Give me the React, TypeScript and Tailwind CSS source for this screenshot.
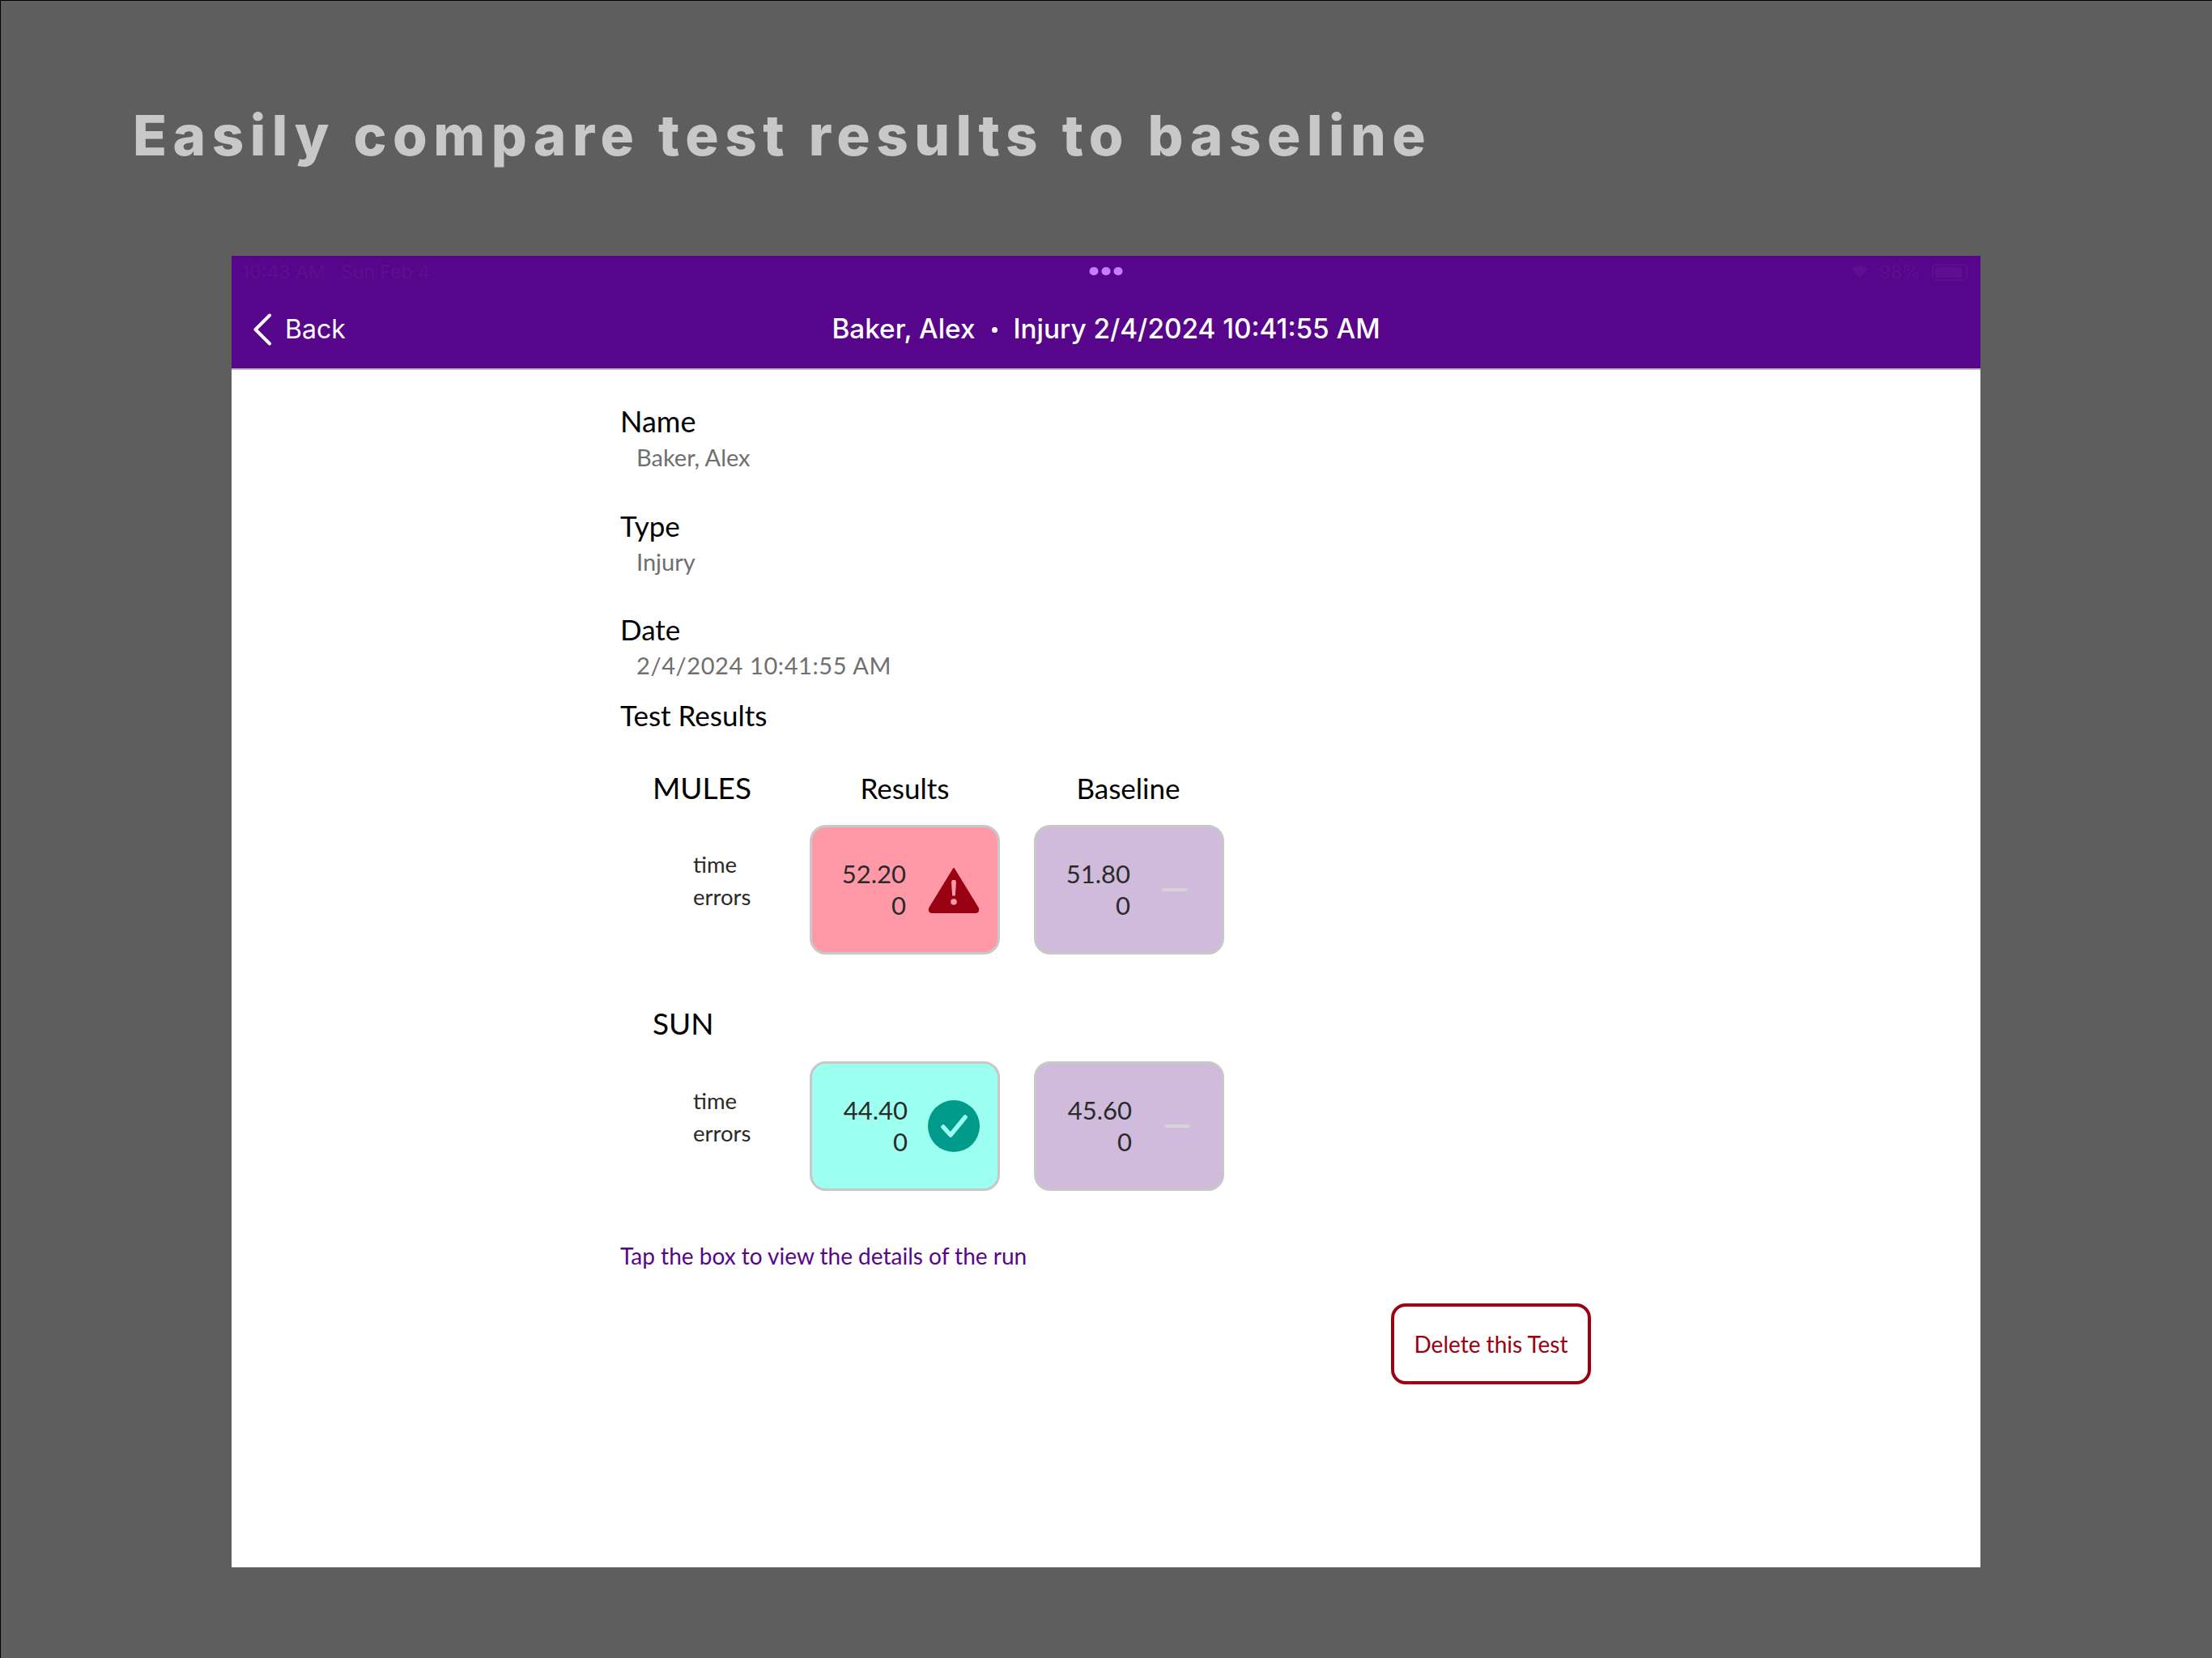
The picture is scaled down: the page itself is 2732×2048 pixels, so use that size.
const body = "font-['Lato',sans-serif]";

function Field({
  label,
  value,
  className,
  labelSize = "text-[35px]",
  valueClass = "",
}: {
  label: string;
  value: string;
  className?: string;
  labelSize?: string;
  valueClass?: string;
}) {
  return (
    <div className={className}>
      <p className={`h-[42px] leading-[42px] text-black ${labelSize}`}>{label}</p>
      <p className={`h-[48px] pl-[20px] text-[29px] leading-[48px] text-[#6f6f6f] ${valueClass}`}>{value}</p>
    </div>
  );
}

function WarnIcon() {
  return (
    <svg width="66" height="58" viewBox="0 0 66 58" className="shrink-0">
      <path
        d="M33 3 L63 52 Q64 57 60 57 L6 57 Q2 57 3 52 Z"
        fill="#990012"
        stroke="#990012"
        strokeWidth="2"
        strokeLinejoin="round"
      />
      <path d="M31 17 h4 l1 2.5 -1.2 17 h-3.6 l-1.2 -17 z" fill="#ff99a8" />
      <circle cx="33" cy="44" r="3.8" fill="#ff99a8" />
    </svg>
  );
}

function OkIcon() {
  return (
    <svg width="64" height="64" viewBox="0 0 64 64" className="shrink-0">
      <circle cx="32" cy="32" r="32" fill="#009b8a" />
      <path d="M19 33 L28 43 L46 21" fill="none" stroke="#9cfff0" strokeWidth="5.5" strokeLinecap="round" strokeLinejoin="round" />
    </svg>
  );
}

function ScoreBox({
  time,
  bg,
  icon,
  textWidth,
}: {
  time: string;
  bg: string;
  icon: React.ReactNode;
  textWidth: string;
}) {
  return (
    <div className={`flex h-[160px] w-[235px] items-center rounded-[20px] border-[3px] border-[#c8c8c8] ${bg}`}>
      <div className={`text-right text-[31px] leading-[39px] text-[#2a2a2a] ${textWidth}`}>
        <p>{time}</p>
        <p>0</p>
      </div>
      {icon}
    </div>
  );
}

function Dash({ className }: { className: string }) {
  return <div className={`h-[4px] w-[32px] rounded-full bg-[#d4d4d4] ${className}`} />;
}

function TestRow({ children }: { children: React.ReactNode }) {
  return (
    <div className="flex items-start">
      <div className="w-[234px] pt-[29px] pl-[90px] text-[27.5px] leading-[40px] text-[#2a2a2a]">
        <p>time</p>
        <p>errors</p>
      </div>
      <div className="flex gap-[42px]">{children}</div>
    </div>
  );
}

function StatusBar() {
  return (
    <div className="flex h-[40px] items-center justify-between pr-[16px] pl-[13px] text-[23px] text-[#5c0f8f]">
      <span>10:43 AM&nbsp;&nbsp;&nbsp;Sun Feb 4</span>
      <div className="flex items-center gap-[14px]">
        <svg width="20" height="20" viewBox="0 0 20 20">
          <path d="M10 18 L0 6 Q10 -2 20 6 Z" fill="#5c0f8f" />
        </svg>
        <span>98%</span>
        <div className="h-[21px] w-[44px] rounded-[5px] border-2 border-[#5c0f8f] p-[2px]">
          <div className="h-full w-[92%] rounded-[2px] bg-[#5c0f8f]" />
        </div>
      </div>
    </div>
  );
}

export default function App() {
  return (
    <div className={`h-[2048px] w-[2732px] border-t border-l border-black bg-[#5e5e5e] ${body}`}>
      <h1 className="pt-[124px] pl-[163px] font-['Inter',sans-serif] text-[69px] leading-[84px] font-extrabold tracking-[7.5px] text-[#c8c8c8]">
        Easily compare test results to baseline
      </h1>

      <div className="mt-[107px] ml-[285px] flex h-[1620px] w-[2160px] flex-col bg-white">
        <header className="relative h-[141px] border-b-2 border-[#bdbdbd] bg-[#57068c] font-['Inter',sans-serif] text-white">
          <StatusBar />
          <div className="absolute top-[14px] left-1/2 flex -translate-x-1/2 gap-[4px]">
            <span className="h-[10px] w-[11px] rounded-full bg-[#c77dff]" />
            <span className="h-[10px] w-[11px] rounded-full bg-[#c77dff]" />
            <span className="h-[10px] w-[11px] rounded-full bg-[#c77dff]" />
          </div>
          <div className="relative flex h-[102px] items-center justify-center">
            <div className="absolute left-[26px] flex items-center text-[32px]">
              <svg width="24" height="40" viewBox="0 0 24 40">
                <path d="M21 2.5 L3.5 20 L21 37.5" fill="none" stroke="white" strokeWidth="4" strokeLinecap="round" strokeLinejoin="round" />
              </svg>
              <span className="ml-[16px]">Back</span>
            </div>
            <p className="flex items-center text-[33.3px] font-medium">
              Baker, Alex
              <span className="mx-[20px] h-[7px] w-[7px] rounded-full bg-white" />
              Injury 2/4/2024 10:41:55 AM
            </p>
          </div>
        </header>

        <main className="pt-[42px] pl-[480px]">
          <Field label="Name" value="Baker, Alex" labelSize="text-[36px]" />
          <Field label="Type" value="Injury" className="mt-[39px]" />
          <Field label="Date" value="2/4/2024 10:41:55 AM" className="mt-[38px]" valueClass="tracking-[0.6px]" />
          <p className="mt-[16px] text-[35px] leading-[42px] text-black">Test Results</p>

          <div className="mt-[48px] flex h-[42px] items-center text-[35px] leading-[42px] text-black">
            <p className="w-[234px] pl-[40px] text-[37px]">MULES</p>
            <p className="w-[235px] text-center">Results</p>
            <p className="ml-[41px] w-[235px] text-center">Baseline</p>
          </div>
          <div className="mt-[25px]">
            <TestRow>
              <ScoreBox
                time="52.20"
                bg="bg-[#ff99a8]"
                textWidth="w-[116px] mr-[26px]"
                icon={<WarnIcon />}
              />
              <ScoreBox time="51.80" bg="bg-[#d0bbdd]" textWidth="w-[116px]" icon={<Dash className="ml-[39px]" />} />
            </TestRow>
          </div>

          <p className="mt-[64px] h-[42px] pl-[40px] text-[37px] leading-[42px] text-black">SUN</p>
          <div className="mt-[26px]">
            <TestRow>
              <ScoreBox
                time="44.40"
                bg="bg-[#9cfff0]"
                textWidth="w-[118px] mr-[25px]"
                icon={<OkIcon />}
              />
              <ScoreBox time="45.60" bg="bg-[#d0bbdd]" textWidth="w-[118px]" icon={<Dash className="ml-[40px]" />} />
            </TestRow>
          </div>

          <p className="mt-[60px] text-[28px] leading-[40px] text-[#57068c]">Tap the box to view the details of the run</p>

          <div className="mt-[39px] flex pl-[952px]">
            <button className="flex h-[100px] w-[247px] items-center justify-center rounded-[18px] border-4 border-[#990012] bg-white text-[28px] text-[#990012]">
              Delete this Test
            </button>
          </div>
        </main>
      </div>
    </div>
  );
}
